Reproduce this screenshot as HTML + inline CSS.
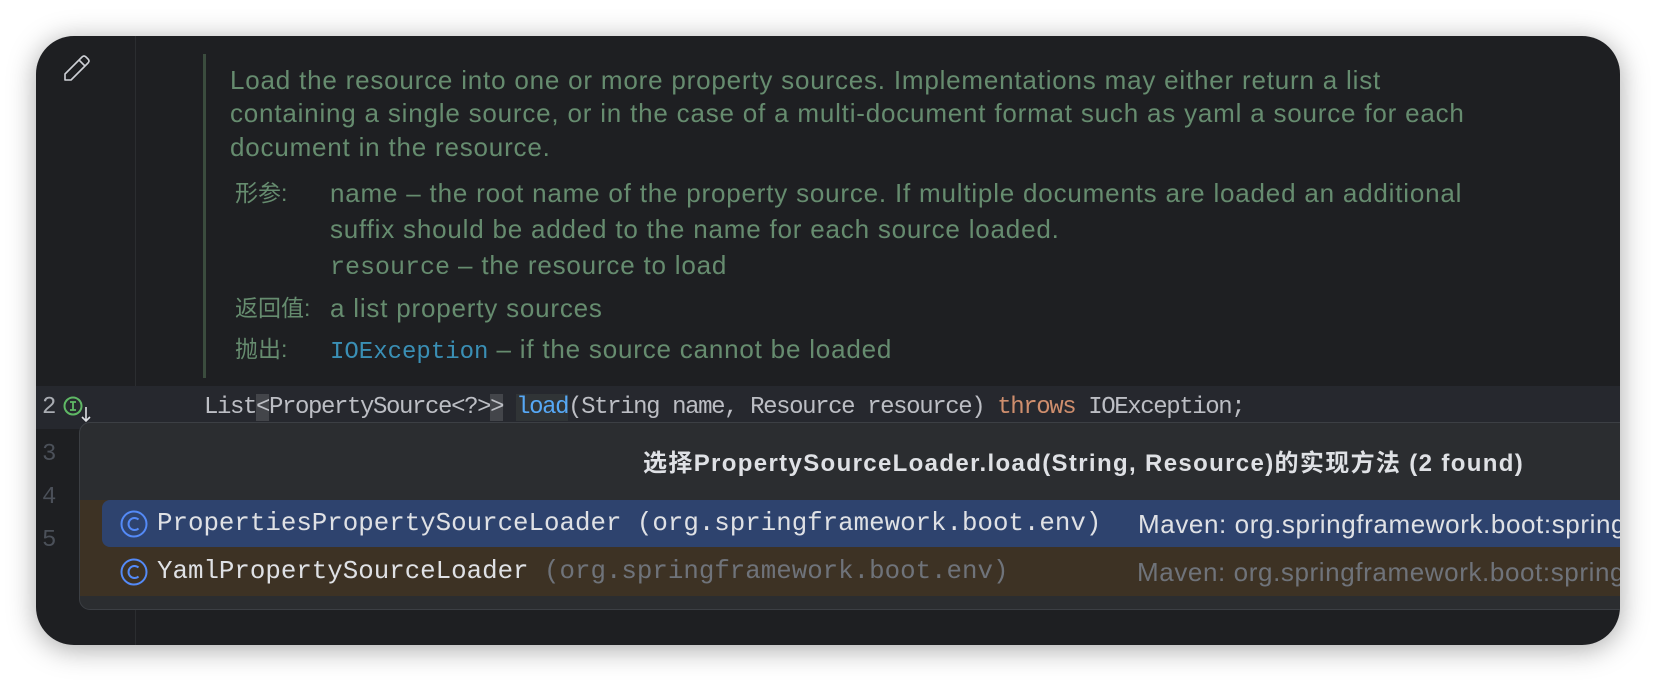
<!DOCTYPE html>
<html><head><meta charset="utf-8"><style>
*{margin:0;padding:0;box-sizing:border-box}
body{width:1656px;height:682px;background:#fff;overflow:hidden;position:relative;font-family:"Liberation Sans","Noto Sans CJK SC",sans-serif}
#win{position:absolute;left:36px;top:36px;width:1584px;height:609px;background:#1e1f22;border-radius:38px;overflow:hidden;box-shadow:0 4px 28px rgba(0,0,0,.35)}
.a{position:absolute;white-space:nowrap;line-height:34px;height:34px}
.doc{color:#668c6f;font-size:26px;letter-spacing:0.8px}
.mono{font-family:"Liberation Mono","Noto Sans CJK SC",monospace;font-size:25.8px;letter-spacing:0}
.ln{color:#4b5059;font-family:"Liberation Mono",monospace;font-size:24px}
</style></head><body>
<div id="win">
  <div style="position:absolute;left:99px;top:0;width:1px;height:609px;background:#2b2d30"></div>
  <svg style="position:absolute;left:26px;top:17px" width="30" height="30" viewBox="0 0 30 30"><path d="M3 27 L3 21 L20 4 Q22 2 24 4 L26 6 Q28 8 26 10 L9 27 Z M17 7 L23 13" fill="none" stroke="#ced0d6" stroke-width="1.6" stroke-linejoin="round"/></svg>
  <div style="position:absolute;left:167px;top:18px;width:3px;height:324px;background:#3b4c3e"></div>
  <div class="a doc" style="left:194px;top:27px">Load the resource into one or more property sources. Implementations may either return a list</div>
  <div class="a doc" style="left:194px;top:60px">containing a single source, or in the case of a multi-document format such as yaml a source for each</div>
  <div class="a doc" style="left:194px;top:94px">document in the resource.</div>
  <div class="a doc" style="left:199px;top:140px;font-size:23px;letter-spacing:0">形参:</div>
  <div class="a doc" style="left:294px;top:140px">name – the root name of the property source. If multiple documents are loaded an additional</div>
  <div class="a doc" style="left:294px;top:176px">suffix should be added to the name for each source loaded.</div>
  <div class="a doc" style="left:294px;top:212px"><span class="mono" style="font-size:25px">resource</span> – the resource to load</div>
  <div class="a doc" style="left:199px;top:255px;font-size:23px;letter-spacing:0">返回值:</div>
  <div class="a doc" style="left:294px;top:255px">a list property sources</div>
  <div class="a doc" style="left:199px;top:296px;font-size:23px;letter-spacing:0">抛出:</div>
  <div class="a doc" style="left:294px;top:296px"><span class="mono" style="font-size:24px;color:#3a8fb5">IOException</span> – if the source cannot be loaded</div>

  <div style="position:absolute;left:0;top:350px;width:1584px;height:43px;background:#26282e"></div>
  <div class="a ln" style="left:6px;top:355px;color:#a9acb2">2</div>
  <svg style="position:absolute;left:27px;top:360px" width="30" height="30" viewBox="0 0 30 30"><circle cx="10" cy="10" r="8.5" fill="none" stroke="#5fb865" stroke-width="2"/><path d="M7 6 H13 M10 6 V14 M7 14 H13" stroke="#5fb865" stroke-width="1.8"/><path d="M23 11 V25 M19 21 L23 25 L27 21" fill="none" stroke="#dfe1e5" stroke-width="1.6"/></svg>
  <div class="a mono" style="left:168px;top:355px;color:#bcbec4;font-size:24px;letter-spacing:-1.4px">List<span style="background:#43454a">&lt;</span>PropertySource&lt;?&gt;<span style="background:#43454a">&gt;</span> <span style="color:#56a8f5;background:#303436">load</span>(String name, Resource resource) <span style="color:#cf8e6d">throws</span> IOException;</div>
  <div class="a ln" style="left:6px;top:402px">3</div>
  <div class="a ln" style="left:6px;top:445px">4</div>
  <div class="a ln" style="left:6px;top:488px">5</div>

  <div style="position:absolute;left:43px;top:386px;width:1560px;height:188px;background:#2b2d30;border:1px solid #3c3f44;border-radius:11px;overflow:hidden">
    <div class="a" style="left:563px;top:24px;color:#dfe1e5;font-weight:bold;font-size:24px;letter-spacing:1.35px;font-family:'Liberation Sans','Noto Sans CJK SC',sans-serif">选择PropertySourceLoader.load(String, Resource)的实现方法 (2 found)</div>
    <div style="position:absolute;left:0;top:77px;width:1560px;height:96px;background:#3d3224"></div>
    <div style="position:absolute;left:22px;top:77px;width:1560px;height:47px;background:#2e436e;border-radius:8px 0 0 8px"></div>
    <svg style="position:absolute;left:40px;top:87px" width="28" height="28" viewBox="0 0 28 28"><circle cx="14" cy="14" r="12.5" fill="none" stroke="#548af7" stroke-width="2"/><path d="M18.5 9.5 A6 6 0 1 0 18.5 18.5" fill="none" stroke="#548af7" stroke-width="2"/></svg>
    <svg style="position:absolute;left:40px;top:135px" width="28" height="28" viewBox="0 0 28 28"><circle cx="14" cy="14" r="12.5" fill="none" stroke="#548af7" stroke-width="2"/><path d="M18.5 9.5 A6 6 0 1 0 18.5 18.5" fill="none" stroke="#548af7" stroke-width="2"/></svg>
    <div class="a mono" style="left:77px;top:84px;color:#dfe1e5">PropertiesPropertySourceLoader (org.springframework.boot.env)</div>
    <div class="a" style="left:1058px;top:84px;color:#dfe1e5;font-size:26px;letter-spacing:0.6px">Maven: org.springframework.boot:spring-boot:3.1.0</div>
    <div class="a mono" style="left:77px;top:132px;color:#dfe1e5">YamlPropertySourceLoader <span style="color:#6f737a">(org.springframework.boot.env)</span></div>
    <div class="a" style="left:1057px;top:132px;color:#6f737a;font-size:26px;letter-spacing:0.6px">Maven: org.springframework.boot:spring-boot:3.1.0</div>
  </div>
</div>
</body></html>
